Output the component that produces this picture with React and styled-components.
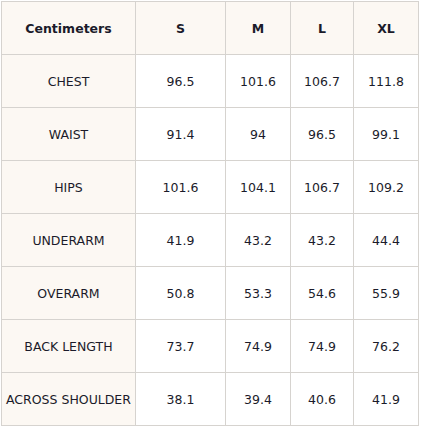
import React from 'react';
import styled, { createGlobalStyle } from 'styled-components';

const GlobalStyle = createGlobalStyle`
  body {
    margin: 0;
    background: #ffffff;
  }
`;

const Wrap = styled.div`
  padding: 1px 0 0 1px;
`;

const Table = styled.table`
  border-collapse: collapse;
  table-layout: fixed;
  width: 417px;
  font-family: "DejaVu Sans", Verdana, sans-serif;
  font-size: 12.5px;
  color: #1b1b2a;
  border: 1px solid #d6d3cf;
`;

const Cell = styled.td`
  height: 52px;
  padding: 0;
  text-align: center;
  vertical-align: middle;
  border: 1px solid #d6d3cf;
  background: ${(p) => (p.$shaded ? '#fcf8f3' : '#ffffff')};
  font-weight: ${(p) => (p.$bold ? 'bold' : 'normal')};
  white-space: nowrap;
`;

const widths = [134, 90, 65, 63, 65];
const sizes = ['S', 'M', 'L', 'XL'];

const rows = [
  ['CHEST', '96.5', '101.6', '106.7', '111.8'],
  ['WAIST', '91.4', '94', '96.5', '99.1'],
  ['HIPS', '101.6', '104.1', '106.7', '109.2'],
  ['UNDERARM', '41.9', '43.2', '43.2', '44.4'],
  ['OVERARM', '50.8', '53.3', '54.6', '55.9'],
  ['BACK LENGTH', '73.7', '74.9', '74.9', '76.2'],
  ['ACROSS SHOULDER', '38.1', '39.4', '40.6', '41.9'],
];

const App = () => {
  return (
    <Wrap>
      <GlobalStyle />
      <Table>
        <colgroup>
          {widths.map((w, i) => (
            <col key={i} style={{ width: w }} />
          ))}
        </colgroup>
        <thead>
          <tr>
            <Cell as="th" $shaded $bold>Centimeters</Cell>
            {sizes.map((s) => (
              <Cell as="th" key={s} $shaded $bold>{s}</Cell>
            ))}
          </tr>
        </thead>
        <tbody>
          {rows.map((row) => (
            <tr key={row[0]}>
              {row.map((v, i) => (
                <Cell key={i} $shaded={i === 0}>{v}</Cell>
              ))}
            </tr>
          ))}
        </tbody>
      </Table>
    </Wrap>
  );
};

export default App;
